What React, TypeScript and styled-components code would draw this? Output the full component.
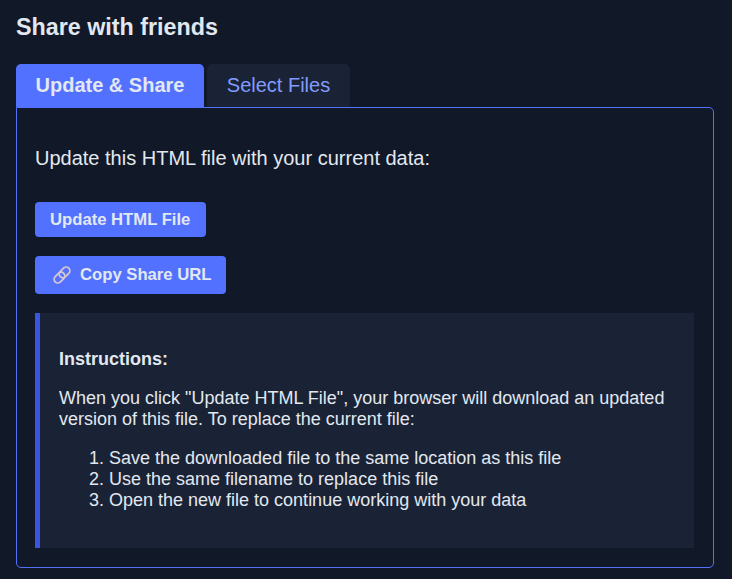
import React from "react";
import styled, { createGlobalStyle } from "styled-components";

const GlobalStyle = createGlobalStyle`
  * { box-sizing: border-box; }
  body {
    margin: 0;
    background: #111827;
    color: #e2e8f0;
    font-family: "Liberation Sans", Arial, sans-serif;
  }
`;

const Page = styled.main`
  height: 579px;
  padding: 13px 18px 11px 16px;
  display: flex;
  flex-direction: column;
  overflow: hidden;
`;

const Title = styled.h3`
  margin: 0 0 23px;
  font-size: 23.3px;
  line-height: 28px;
`;

const Tabs = styled.div`
  display: flex;
  gap: 3px;
`;

const Tab = styled.button<{ $active?: boolean; $width: number }>`
  width: ${(p) => p.$width}px;
  height: 43px;
  padding: 0 0 2px;
  border: 0;
  border-radius: 5px 5px 0 0;
  background: ${(p) => (p.$active ? "#5271ff" : "#1a2335")};
  color: ${(p) => (p.$active ? "#e2e8f0" : "#819bff")};
  font: ${(p) => (p.$active ? "bold" : "normal")} 20px/40px "Liberation Sans", Arial, sans-serif;
`;

const Panel = styled.section`
  height: 461px;
  padding: 38px 19px 19px 18px;
  border: 1px solid #5271ff;
  border-radius: 0 5px 5px 5px;
  display: flex;
  flex-direction: column;
  align-items: flex-start;
`;

const Lead = styled.p`
  margin: 0 0 32px;
  font-size: 20px;
  line-height: 24px;
`;

const Button = styled.button<{ $width: number; $height: number }>`
  display: flex;
  align-items: center;
  flex: none;
  width: ${(p) => p.$width}px;
  height: ${(p) => p.$height}px;
  margin: 0 0 19px;
  padding: 0 15px;
  border: 0;
  border-radius: 4px;
  background: #5271ff;
  color: #e2e8f0;
  font: bold 16.67px/20px "Liberation Sans", Arial, sans-serif;
  white-space: nowrap;
`;

const LinkIcon = styled.svg`
  flex: none;
  width: 18px;
  height: 18px;
  margin: 0 9px 0 3px;
`;

const Note = styled.div`
  align-self: stretch;
  height: 235px;
  padding: 36px 19px 0;
  border-left: 5px solid #3b55e0;
  background: #1a2335;
  font-size: 18px;
  line-height: 21px;
`;

const NoteText = styled.p`
  margin: 0 0 18px;
`;

const Steps = styled.ol`
  margin: 0;
  padding-left: 50px;
`;

export default function App() {
  return (
    <>
      <GlobalStyle />
      <Page>
        <Title>Share with friends</Title>
        <Tabs>
          <Tab $active $width={188}>Update &amp; Share</Tab>
          <Tab $width={143}>Select Files</Tab>
        </Tabs>
        <Panel>
          <Lead>Update this HTML file with your current data:</Lead>
          <Button $width={171} $height={35}>Update HTML File</Button>
          <Button $width={191} $height={38}>
            <LinkIcon viewBox="0 0 18 18" fill="none">
              <g transform="rotate(-45 9 9)" stroke="#d6c6d0" strokeWidth="1.8">
                <rect x="-0.6" y="5.3" width="12" height="7.4" rx="3.7" />
                <rect x="6.6" y="5.3" width="12" height="7.4" rx="3.7" />
              </g>
            </LinkIcon>
            Copy Share URL
          </Button>
          <Note>
            <NoteText><strong>Instructions:</strong></NoteText>
            <NoteText>
              When you click "Update HTML File", your browser will download an updated version of this
              file. To replace the current file:
            </NoteText>
            <Steps>
              <li>Save the downloaded file to the same location as this file</li>
              <li>Use the same filename to replace this file</li>
              <li>Open the new file to continue working with your data</li>
            </Steps>
          </Note>
        </Panel>
      </Page>
    </>
  );
}
